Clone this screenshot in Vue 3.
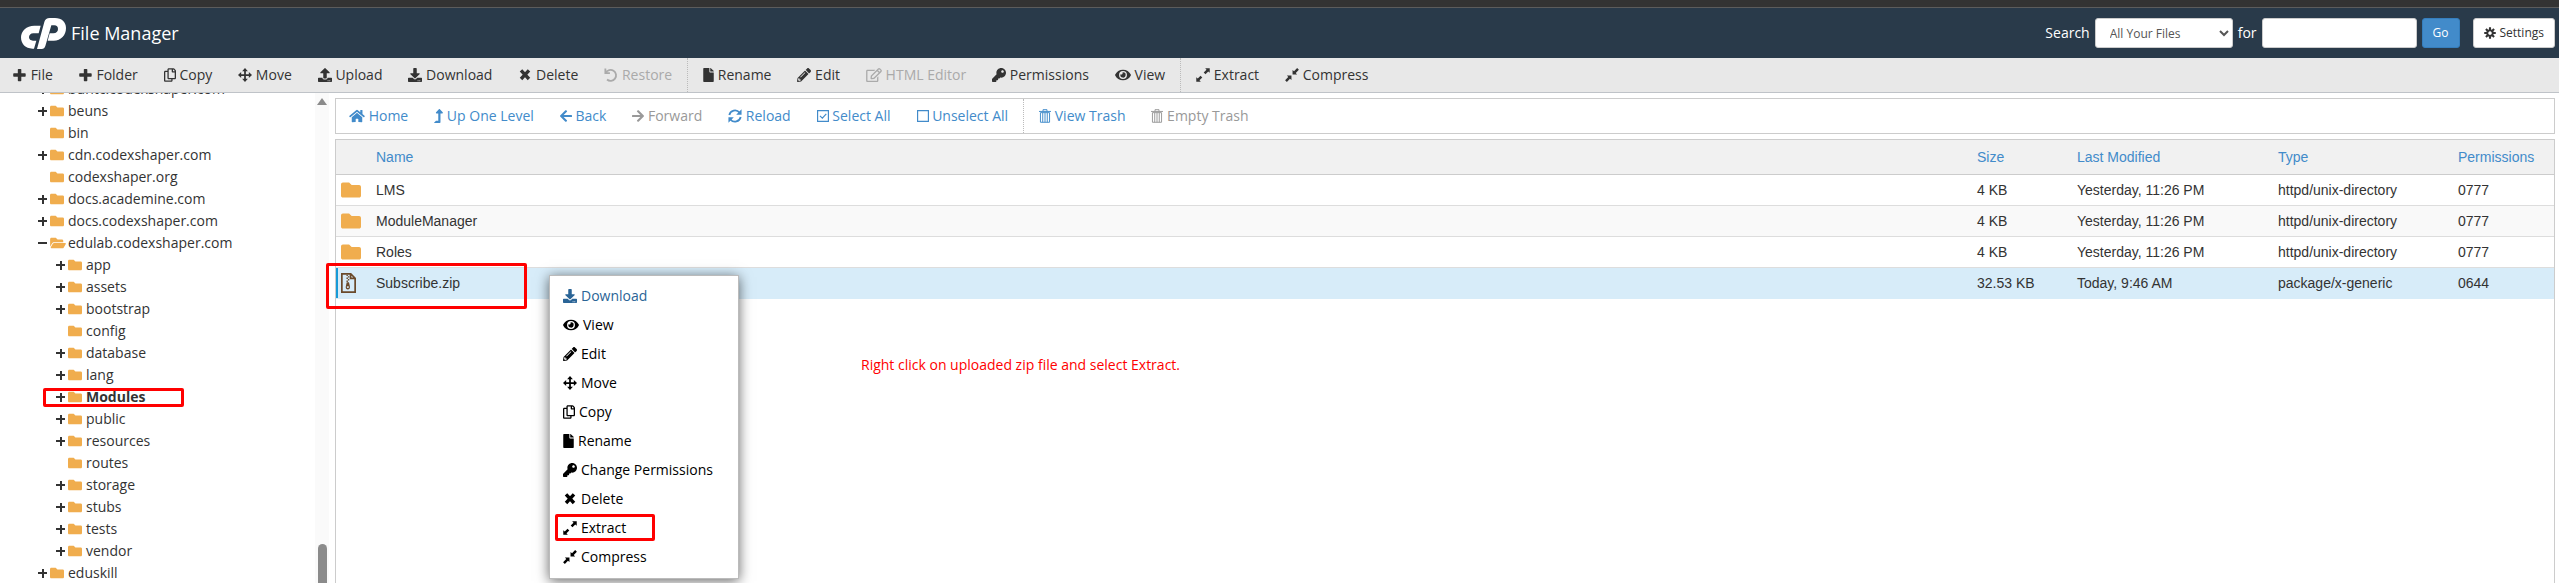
<template>
  <div class="file-manager">
    <div class="top-strip"></div>

    <header class="masthead">
      <svg class="logo" viewBox="0 0 135 93" aria-hidden="true">
        <path d="M59 23H40C16 23 0 40 0 58C0 78 14 92 34 92H39L46 68H36C29 68 24 64 24 58C24 51 29 46 37 46H53z" />
        <path d="M48 93L70 12C72 4 78 0 86 0H102C122 0 135 12 135 30C135 52 120 68 98 68H80L86 46H97C106 46 111 40 111 33C111 26 107 22 100 22H91L73 84C71 90 68 93 62 93z" />
      </svg>
      <h1 class="title">File Manager</h1>

      <form class="search" @submit.prevent>
        <label for="search-scope">Search</label>
        <select id="search-scope" class="field scope">
          <option>All Your Files</option>
        </select>
        <label for="search-text">for</label>
        <input id="search-text" class="field query" type="text" />
        <button class="btn btn-go" type="submit">Go</button>
        <button class="btn btn-settings" type="button">
          <svg class="icon" width="12" height="12" viewBox="0 0 512 512">
            <path class="line" stroke-width="90" :d="icons.cog.s" />
          </svg>
          Settings
        </button>
      </form>
    </header>

    <nav class="toolbar">
      <div v-for="(group, i) in toolbar" :key="i" class="group">
        <button v-for="item in group" :key="item.label" class="tool" :disabled="item.off">
          <svg class="icon" :width="iconWidth(item.icon)" height="14" :viewBox="box(item.icon)">
            <path v-if="icons[item.icon].d" :d="icons[item.icon].d" />
            <path v-if="icons[item.icon].s" class="line" :stroke-width="icons[item.icon].sw" :d="icons[item.icon].s" />
          </svg>
          {{ item.label }}
        </button>
      </div>
    </nav>

    <div class="body">
      <aside class="sidebar">
        <ul class="tree">
          <li v-for="node in tree" :key="node.name" class="node" :class="{ nested: node.nested, current: node.current }">
            <button v-if="node.toggle" class="toggle" :aria-label="'Toggle ' + node.name">
              <svg width="10" height="10" viewBox="0 0 10 10">
                <path class="line" stroke-width="2" :d="node.toggle === 'open' ? 'M0 5H9' : 'M0 5H9M5 1V10'" />
              </svg>
            </button>
            <span v-else class="toggle"></span>
            <a href="#" class="node-link">
              <svg
                class="icon folder"
                :width="node.toggle === 'open' ? 16 : 14"
                height="14"
                :viewBox="box(node.toggle === 'open' ? 'folderOpen' : 'folder')"
              >
                <path :d="node.toggle === 'open' ? icons.folderOpen.d : icons.folder.d" />
              </svg>
              <span class="node-name">{{ node.name }}</span>
            </a>
            <span v-if="node.current" class="mark mark-node"></span>
          </li>
        </ul>
        <div class="scrollbar">
          <span class="scroll-arrow"></span>
          <span class="scroll-thumb"></span>
        </div>
      </aside>

      <main class="content">
        <nav class="nav-bar">
          <div v-for="(group, i) in navBar" :key="i" class="group">
            <button v-for="item in group" :key="item.label" class="tool" :disabled="item.off">
              <svg class="icon" :width="iconWidth(item.icon)" height="14" :viewBox="box(item.icon)">
                <path v-if="icons[item.icon].d" :d="icons[item.icon].d" />
                <path v-if="icons[item.icon].s" class="line" :stroke-width="icons[item.icon].sw" :d="icons[item.icon].s" />
              </svg>
              {{ item.label }}
            </button>
          </div>
        </nav>

        <div class="list">
          <table class="files">
            <colgroup>
              <col class="col-icon" />
              <col />
              <col class="col-size" />
              <col class="col-date" />
              <col class="col-type" />
              <col class="col-perm" />
            </colgroup>
            <thead>
              <tr>
                <th></th>
                <th v-for="h in headings" :key="h"><button class="sort">{{ h }}</button></th>
              </tr>
            </thead>
            <tbody>
              <tr v-for="file in files" :key="file.name" :class="{ selected: file.zip }">
                <td class="cell-icon">
                  <svg v-if="file.zip" class="icon zip" width="15" height="20" viewBox="0 0 384 512">
                    <path class="line" stroke-width="44" :d="icons.zip.s" />
                    <path class="line" stroke-width="36" d="M140 60h36M176 98h36M140 136h36M176 174h36M140 212h36" />
                    <path fill-rule="evenodd" d="M146 236h58l24 112c8 44-18 76-53 76s-61-32-53-76zM175 342a26 20 0 1 0 1 0z" />
                  </svg>
                  <svg v-else class="icon folder" width="20" height="20" :viewBox="box('folder')">
                    <path :d="icons.folder.d" />
                  </svg>
                </td>
                <td>{{ file.name }}</td>
                <td>{{ file.size }}</td>
                <td>{{ file.date }}</td>
                <td>{{ file.type }}</td>
                <td>{{ file.perm }}</td>
              </tr>
            </tbody>
          </table>
        </div>

        <span class="mark mark-file"></span>
        <p class="note">Right click on uploaded zip file and select Extract.</p>

        <ul class="menu">
          <li v-for="item in menu" :key="item.label">
            <button class="menu-item" :class="{ hovered: item.hovered }">
              <svg class="icon" :width="iconWidth(item.icon)" height="14" :viewBox="box(item.icon)">
                <path v-if="icons[item.icon].d" :d="icons[item.icon].d" />
                <path v-if="icons[item.icon].s" class="line" :stroke-width="icons[item.icon].sw" :d="icons[item.icon].s" />
              </svg>
              {{ item.label }}
            </button>
            <span v-if="item.icon === 'expand'" class="mark mark-menu"></span>
          </li>
        </ul>
      </main>
    </div>
  </div>
</template>

<script setup>
// w: viewBox width (height is always 512), d: filled path, s: stroked path, sw: stroke width
const icons = {
  plus: { w: 512, d: 'M440 192H304V56c0-13-11-24-24-24h-80c-13 0-24 11-24 24v136H32c-13 0-24 11-24 24v80c0 13 11 24 24 24h144v136c0 13 11 24 24 24h80c13 0 24-11 24-24V320h136c13 0 24-11 24-24v-80c0-13-11-24-24-24z' },
  copy: { w: 448, d: 'M433.941 65.941l-51.882-51.882A48 48 0 0 0 348.118 0H176c-26.51 0-48 21.49-48 48v48H48c-26.51 0-48 21.49-48 48v320c0 26.51 21.49 48 48 48h224c26.51 0 48-21.49 48-48v-48h80c26.51 0 48-21.49 48-48V99.882a48 48 0 0 0-14.059-33.941zM266 464H54a6 6 0 0 1-6-6V150a6 6 0 0 1 6-6h74v224c0 26.51 21.49 48 48 48h96v42a6 6 0 0 1-6 6zm128-96H182a6 6 0 0 1-6-6V54a6 6 0 0 1 6-6h106v88c0 13.255 10.745 24 24 24h88v202a6 6 0 0 1-6 6zm6-256h-64V48h9.632c1.591 0 3.117.632 4.243 1.757l48.368 48.368a6 6 0 0 1 1.757 4.243V112z' },
  move: { w: 512, d: 'M256 0L362 116H288V224H396V150L512 256L396 362V288H288V396H362L256 512L150 396H224V288H116V362L0 256L116 150V224H224V116H150z' },
  upload: { w: 512, d: 'M296 384h-80c-13.3 0-24-10.7-24-24V192h-87.7c-17.8 0-26.7-21.5-14.1-34.1L242.3 5.7c7.5-7.5 19.8-7.5 27.3 0l152.2 152.2c12.6 12.6 3.7 34.1-14.1 34.1H320v168c0 13.3-10.7 24-24 24zm216-8v112c0 13.3-10.7 24-24 24H24c-13.3 0-24-10.7-24-24V376c0-13.3 10.7-24 24-24h136v8c0 30.9 25.1 56 56 56h80c30.9 0 56-25.1 56-56v-8h136c13.3 0 24 10.7 24 24zm-124 88c0-11-9-20-20-20s-20 9-20 20 9 20 20 20 20-9 20-20zm64 0c0-11-9-20-20-20s-20 9-20 20 9 20 20 20 20-9 20-20z' },
  download: { w: 512, d: 'M216 0h80c13.3 0 24 10.7 24 24v168h87.7c17.8 0 26.7 21.5 14.1 34.1L269.7 378.3c-7.5 7.5-19.8 7.5-27.3 0L90.1 226.1c-12.6-12.6-3.7-34.1 14.1-34.1H192V24c0-13.3 10.7-24 24-24zm296 376v112c0 13.3-10.7 24-24 24H24c-13.3 0-24-10.7-24-24V376c0-13.3 10.7-24 24-24h146.7l49 49c20.1 20.1 52.5 20.1 72.6 0l49-49H488c13.3 0 24 10.7 24 24zm-124 88c0-11-9-20-20-20s-20 9-20 20 9 20 20 20 20-9 20-20zm64 0c0-11-9-20-20-20s-20 9-20 20 9 20 20 20 20-9 20-20z' },
  remove: { w: 512, s: 'M110 90L402 402M402 90L110 402', sw: 124 },
  undo: { w: 512, s: 'M50 20V186H216M64 176A200 200 0 1 1 110 420', sw: 66 },
  file: { w: 384, d: 'M224 136V0H24C10.7 0 0 10.7 0 24v464c0 13.3 10.7 24 24 24h336c13.3 0 24-10.7 24-24V160H248c-13.2 0-24-10.8-24-24zm160-14.1v6.1H256V0h6.1c6.4 0 12.5 2.5 17 7l97.9 98c4.5 4.5 7 10.6 7 16.9z' },
  pencil: { w: 512, d: 'M497.9 142.1l-46.1 46.1c-4.7 4.7-12.3 4.7-17 0l-111-111c-4.7-4.7-4.7-12.3 0-17l46.1-46.1c18.7-18.7 49.1-18.7 67.9 0l60.1 60.1c18.8 18.7 18.8 49.1 0 67.9zM284.2 99.8L21.6 362.4.4 483.9c-2.9 16.4 11.4 30.6 27.8 27.8l121.5-21.3 262.6-262.6c4.7-4.7 4.7-12.3 0-17l-111-111c-4.8-4.7-12.4-4.7-17.1 0zM124.1 339.9c-5.5-5.5-5.5-14.3 0-19.8l154-154c5.5-5.5 14.3-5.5 19.8 0s5.5 14.3 0 19.8l-154 154c-5.5 5.5-14.3 5.5-19.8 0zM88 424h48v36.3l-64.5 11.3-31.1-31.1L51.7 376H88v48z' },
  edit: { w: 576, d: 'M402.3 344.9l32-32c5-5 13.7-1.5 13.7 5.7V464c0 26.5-21.5 48-48 48H48c-26.5 0-48-21.5-48-48V112c0-26.5 21.5-48 48-48h273.5c7.1 0 10.7 8.6 5.7 13.7l-32 32c-1.5 1.5-3.5 2.3-5.7 2.3H48v352h352V350.5c0-2.1.8-4.1 2.3-5.6zm156.6-201.8L296.3 405.7l-90.4 10c-26.2 2.9-48.5-19.2-45.6-45.6l10-90.4L432.9 17.1c22.9-22.9 59.9-22.9 82.7 0l43.2 43.2c22.9 22.9 22.9 60 .1 82.8zM460.1 174L402 115.9 216.2 301.8l-7.3 65.3 65.3-7.3L460.1 174zm64.8-79.7l-43.2-43.2c-4.1-4.1-10.8-4.1-14.8 0L436 82l58.1 58.1 30.9-30.9c4-4.2 4-10.8-.1-14.9z' },
  key: { w: 512, d: 'M512 176.001C512 273.203 433.202 352 336 352c-11.22 0-22.19-1.062-32.827-3.069l-24.012 27.014A23.999 23.999 0 0 1 261.223 384H224v40c0 13.255-10.745 24-24 24h-40v40c0 13.255-10.745 24-24 24H24c-13.255 0-24-10.745-24-24v-78.059c0-6.365 2.529-12.47 7.029-16.971l161.802-161.802C163.108 213.814 160 195.271 160 176 160 78.798 238.797.001 335.999 0 433.488-.001 512 78.511 512 176.001zM336 128c0 26.51 21.49 48 48 48s48-21.49 48-48-21.49-48-48-48-48 21.49-48 48z' },
  eye: { w: 576, d: 'M288 64C161 64 50 139 3 241a32 32 0 0 0 0 30c47 102 158 177 285 177s238-75 285-177a32 32 0 0 0 0-30C526 139 415 64 288 64zm0 336a144 144 0 1 1 0-288 144 144 0 0 1 0 288zm0-240a95 95 0 0 0-25 4 48 48 0 0 1-67 67 96 96 0 1 0 92-71z' },
  expand: { w: 512, d: 'M336 10H502V176L448 128L346 230L282 166L384 64zM176 502H10V336L64 384L166 282L230 346L128 448z' },
  compress: { w: 512, d: 'M276 236V70L330 118L444 4L508 68L394 182L442 236zM236 276V442L182 394L68 508L4 444L118 330L70 276z' },
  home: { w: 576, d: 'M280.37 148.26L96 300.11V464a16 16 0 0 0 16 16l112.06-.29a16 16 0 0 0 15.92-16V368a16 16 0 0 1 16-16h64a16 16 0 0 1 16 16v95.64a16 16 0 0 0 16 16.05L464 480a16 16 0 0 0 16-16V300L295.67 148.26a12.19 12.19 0 0 0-15.3 0zM571.6 251.47L488 182.56V44.05a12 12 0 0 0-12-12h-56a12 12 0 0 0-12 12v72.61L318.47 43a48 48 0 0 0-61 0L4.34 251.47a12 12 0 0 0-1.6 16.9l25.5 31A12 12 0 0 0 45.15 301l235.22-193.74a12.19 12.19 0 0 1 15.3 0L530.9 301a12 12 0 0 0 16.9-1.6l25.5-31a12 12 0 0 0-1.7-16.93z' },
  levelUp: { w: 320, d: 'M313.553 119.669L209.587 7.666c-9.485-10.214-25.676-10.229-35.174 0L70.438 119.669C56.232 134.969 67.062 160 88.025 160H152v272H68.024a11.996 11.996 0 0 0-8.485 3.515l-56 56C-4.021 499.074 1.333 512 12.024 512H208c13.255 0 24-10.745 24-24V160h63.966c20.878 0 31.851-24.969 17.587-40.331z' },
  arrowLeft: { w: 448, d: 'M257.5 445.1l-22.2 22.2c-9.4 9.4-24.6 9.4-33.9 0L7 273c-9.4-9.4-9.4-24.6 0-33.9L201.4 44.7c9.4-9.4 24.6-9.4 33.9 0l22.2 22.2c9.5 9.5 9.3 25-.4 34.3L136.6 216H424c13.3 0 24 10.7 24 24v32c0 13.3-10.7 24-24 24H136.6l120.5 114.8c9.8 9.3 10 24.8.4 34.3z' },
  arrowRight: { w: 448, d: 'M190.5 66.9l22.2-22.2c9.4-9.4 24.6-9.4 33.9 0L441 239c9.4 9.4 9.4 24.6 0 33.9L246.6 467.3c-9.4 9.4-24.6 9.4-33.9 0l-22.2-22.2c-9.5-9.5-9.3-25 .4-34.3L311.4 296H24c-13.3 0-24-10.7-24-24v-32c0-13.3 10.7-24 24-24h287.4L190.9 101.2c-9.8-9.3-10-24.8-.4-34.3z' },
  sync: { w: 512, d: 'M496 10V206H300zM16 502V306H212z', s: 'M48 220A212 212 0 0 1 420 130M464 292A212 212 0 0 1 92 382', sw: 66 },
  checked: { w: 448, s: 'M22 54H426V458H22zM110 250L200 336L346 180', sw: 44 },
  unchecked: { w: 448, s: 'M22 54H426V458H22z', sw: 44 },
  trash: { w: 448, s: 'M0 86H448M150 80V20H298V80M54 130V490H394V130M54 130H394M139 130V490M224 130V490M309 130V490', sw: 36 },
  folder: { w: 512, d: 'M464 128H272l-64-64H48C21.49 64 0 85.49 0 112v288c0 26.51 21.49 48 48 48h416c26.51 0 48-21.49 48-48V176c0-26.51-21.49-48-48-48z' },
  folderOpen: { w: 576, d: 'M572.694 292.093L500.27 416.248A63.997 63.997 0 0 1 444.989 448H45.025c-18.523 0-30.064-20.093-20.731-36.093l72.424-124.155A64 64 0 0 1 152 256h399.964c18.523 0 30.064 20.093 20.73 36.093zM152 224h328v-48c0-26.51-21.49-48-48-48H272l-64-64H48C21.49 64 0 85.49 0 112v278.046l69.077-118.418C86.214 242.25 117.989 224 152 224z' },
  zip: { s: 'M22 22H250L362 134V490H22zM244 22V140H362' },
  cog: { s: 'M256 136A120 120 0 1 0 257 136zM256 10V110M256 402V502M10 256H110M402 256H502M82 82L146 146M366 366L430 430M430 82L366 146M146 366L82 430' }
}

const box = (name) => `0 0 ${icons[name].w} 512`
const iconWidth = (name) => Math.round((icons[name].w / 512) * 14)

const toolbar = [
  [
    { label: 'File', icon: 'plus' },
    { label: 'Folder', icon: 'plus' },
    { label: 'Copy', icon: 'copy' },
    { label: 'Move', icon: 'move' },
    { label: 'Upload', icon: 'upload' },
    { label: 'Download', icon: 'download' },
    { label: 'Delete', icon: 'remove' },
    { label: 'Restore', icon: 'undo', off: true }
  ],
  [
    { label: 'Rename', icon: 'file' },
    { label: 'Edit', icon: 'pencil' },
    { label: 'HTML Editor', icon: 'edit', off: true },
    { label: 'Permissions', icon: 'key' },
    { label: 'View', icon: 'eye' }
  ],
  [
    { label: 'Extract', icon: 'expand' },
    { label: 'Compress', icon: 'compress' }
  ]
]

const navBar = [
  [
    { label: 'Home', icon: 'home' },
    { label: 'Up One Level', icon: 'levelUp' },
    { label: 'Back', icon: 'arrowLeft' },
    { label: 'Forward', icon: 'arrowRight', off: true },
    { label: 'Reload', icon: 'sync' },
    { label: 'Select All', icon: 'checked' },
    { label: 'Unselect All', icon: 'unchecked' }
  ],
  [
    { label: 'View Trash', icon: 'trash' },
    { label: 'Empty Trash', icon: 'trash', off: true }
  ]
]

const tree = [
  { name: 'buntc.codexshaper.com', toggle: 'closed' },
  { name: 'beuns', toggle: 'closed' },
  { name: 'bin' },
  { name: 'cdn.codexshaper.com', toggle: 'closed' },
  { name: 'codexshaper.org' },
  { name: 'docs.academine.com', toggle: 'closed' },
  { name: 'docs.codexshaper.com', toggle: 'closed' },
  { name: 'edulab.codexshaper.com', toggle: 'open' },
  { name: 'app', toggle: 'closed', nested: true },
  { name: 'assets', toggle: 'closed', nested: true },
  { name: 'bootstrap', toggle: 'closed', nested: true },
  { name: 'config', nested: true },
  { name: 'database', toggle: 'closed', nested: true },
  { name: 'lang', toggle: 'closed', nested: true },
  { name: 'Modules', toggle: 'closed', nested: true, current: true },
  { name: 'public', toggle: 'closed', nested: true },
  { name: 'resources', toggle: 'closed', nested: true },
  { name: 'routes', nested: true },
  { name: 'storage', toggle: 'closed', nested: true },
  { name: 'stubs', toggle: 'closed', nested: true },
  { name: 'tests', toggle: 'closed', nested: true },
  { name: 'vendor', toggle: 'closed', nested: true },
  { name: 'eduskill', toggle: 'closed' }
]

const headings = ['Name', 'Size', 'Last Modified', 'Type', 'Permissions']

const files = [
  { name: 'LMS', size: '4 KB', date: 'Yesterday, 11:26 PM', type: 'httpd/unix-directory', perm: '0777' },
  { name: 'ModuleManager', size: '4 KB', date: 'Yesterday, 11:26 PM', type: 'httpd/unix-directory', perm: '0777' },
  { name: 'Roles', size: '4 KB', date: 'Yesterday, 11:26 PM', type: 'httpd/unix-directory', perm: '0777' },
  { name: 'Subscribe.zip', size: '32.53 KB', date: 'Today, 9:46 AM', type: 'package/x-generic', perm: '0644', zip: true }
]

const menu = [
  { label: 'Download', icon: 'download', hovered: true },
  { label: 'View', icon: 'eye' },
  { label: 'Edit', icon: 'pencil' },
  { label: 'Move', icon: 'move' },
  { label: 'Copy', icon: 'copy' },
  { label: 'Rename', icon: 'file' },
  { label: 'Change Permissions', icon: 'key' },
  { label: 'Delete', icon: 'remove' },
  { label: 'Extract', icon: 'expand' },
  { label: 'Compress', icon: 'compress' }
]
</script>

<style>
body { margin: 0; background: #fff; }
</style>

<style scoped>
.file-manager {
  display: flex;
  flex-direction: column;
  height: 100vh;
  overflow: hidden;
  font-family: "Open Sans", "Noto Sans", sans-serif;
  font-size: 14px;
  line-height: 20px;
  color: #333;
}

.file-manager *, .file-manager *::before { box-sizing: border-box; }

button { font: inherit; color: inherit; background: none; border: 0; padding: 0; cursor: pointer; }
ul { list-style: none; margin: 0; padding: 0; }

.icon { flex: none; fill: currentColor; }
.line { fill: none; stroke: currentColor; }
.folder { color: #f0ad4e; }

.top-strip { flex: none; height: 8px; background: #333; border-bottom: 1px solid #5c5c5c; }

.masthead {
  display: flex;
  align-items: center;
  flex: none;
  height: 50px;
  padding: 0 4px 0 21px;
  background: #293a4a;
  color: #fff;
}
.logo { width: 45px; height: 31px; fill: #fff; }
.title { margin: 0 0 0 5px; font-size: 18px; font-weight: 400; }

.search { display: flex; align-items: center; gap: 5px; margin-left: auto; }
.field {
  height: 30px;
  background: #fff;
  border: 1px solid #ccc;
  border-radius: 3px;
  font-family: inherit;
  font-size: 12px;
  color: #555;
}
.scope { width: 138px; padding: 0 0 0 10px; }
.query { width: 155px; padding: 4px 10px; }

.btn {
  display: flex;
  align-items: center;
  gap: 4px;
  height: 30px;
  padding: 0 10px;
  border: 1px solid #ccc;
  border-radius: 3px;
  font-size: 12px;
}
.btn-go { background: #428bca; border-color: #357ebd; }
.btn-settings { margin-left: 8px; background: #fff; color: #333; }

.toolbar, .nav-bar { display: flex; flex: none; }
.toolbar { height: 35px; background: #e8e8e8; border-bottom: 1px solid #bfc3c8; }
.group { display: flex; }
.toolbar .group + .group, .nav-bar .group + .group { border-left: 1px dotted #bbb; padding-left: 2px; }
.group:not(:last-child) { padding-right: 2px; }

.tool { padding: 0 13px; white-space: nowrap; }
.tool .icon { vertical-align: -2px; }
.tool:disabled { color: #aaa; cursor: default; }

.body { display: flex; flex: 1; min-height: 0; }

.sidebar { display: flex; width: 329px; flex: none; overflow: hidden; }
/* list is scrolled part-way, so its first row is half hidden */
.tree { flex: 1; margin-top: -15px; }
.node { position: relative; display: flex; align-items: center; height: 22px; padding-left: 38px; }
.nested { padding-left: 56px; }
.toggle { display: flex; width: 12px; flex: none; }
.node-link { display: flex; align-items: center; color: #333; text-decoration: none; }
.node-link .icon { margin-right: 4px; }
.node-link .icon[width="16"] { margin-right: 2px; }
.current { font-weight: 700; }

.scrollbar {
  display: flex;
  flex-direction: column;
  justify-content: space-between;
  align-items: center;
  width: 14px;
  padding-top: 5px;
  background: #fafafa;
}
.scroll-arrow { border: 5px solid transparent; border-top: 0; border-bottom: 7px solid #8b8b8b; }
.scroll-thumb { width: 9px; height: 39px; border-radius: 5px 5px 0 0; background: #8b8b8b; }

.content {
  position: relative;
  display: flex;
  flex-direction: column;
  gap: 5px;
  flex: 1;
  min-width: 0;
  padding: 5px 4px 0 6px;
}
.nav-bar { height: 36px; border: 1px solid #ccc; color: #428bca; }
.nav-bar .tool:disabled { color: #999; }

.list { flex: 1; border: 1px solid #ccc; border-bottom: 0; }
.files {
  width: 100%;
  table-layout: fixed;
  border-collapse: separate;
  border-spacing: 0;
  font-family: "Liberation Sans", Arial, sans-serif;
}
.col-icon { width: 32px; }
.col-size { width: 100px; }
.col-date { width: 201px; }
.col-type { width: 180px; }
.col-perm { width: 104px; }
th, td { padding: 0 0 0 8px; text-align: left; font-weight: 400; }
th { height: 35px; background: #f1f1f1; border-bottom: 1px solid #ccc; color: #428bca; }
td { height: 31px; border-bottom: 1px solid #ddd; }
.cell-icon { padding-left: 5px; }
.cell-icon .icon { display: block; }
tbody tr:nth-child(even) { background: #f9f9f9; }
tbody .selected, tbody tr.selected:nth-child(even) { background: #d7ecf9; }
.selected td { border-bottom-color: #d7ecf9; }
.selected .cell-icon { box-shadow: inset 2px 0 #179bd7; }
.zip { color: #6b4a2b; }

.menu {
  position: absolute;
  left: 220px;
  top: 182px;
  width: 190px;
  padding: 5px 0 7px;
  background: #fff;
  border: 1px solid #bbb;
  box-shadow: 0 2px 12px rgba(0, 0, 0, 0.6);
  color: #000;
}
.menu li { position: relative; }
.menu-item { display: flex; align-items: center; gap: 4px; width: 100%; height: 29px; padding-left: 13px; }
.hovered { color: #2a6496; }

/* red callouts */
.mark { position: absolute; border: 3px solid #f00; border-radius: 2px; pointer-events: none; }
.mark-node { left: 43px; top: 2px; width: 141px; height: 19px; }
.mark-file { left: -3px; top: 170px; width: 201px; height: 46px; }
.mark-menu { left: 5px; top: 1px; width: 100px; height: 27px; }
.note {
  position: absolute;
  left: 532px;
  top: 262px;
  margin: 0;
  color: #f00;
}
</style>
